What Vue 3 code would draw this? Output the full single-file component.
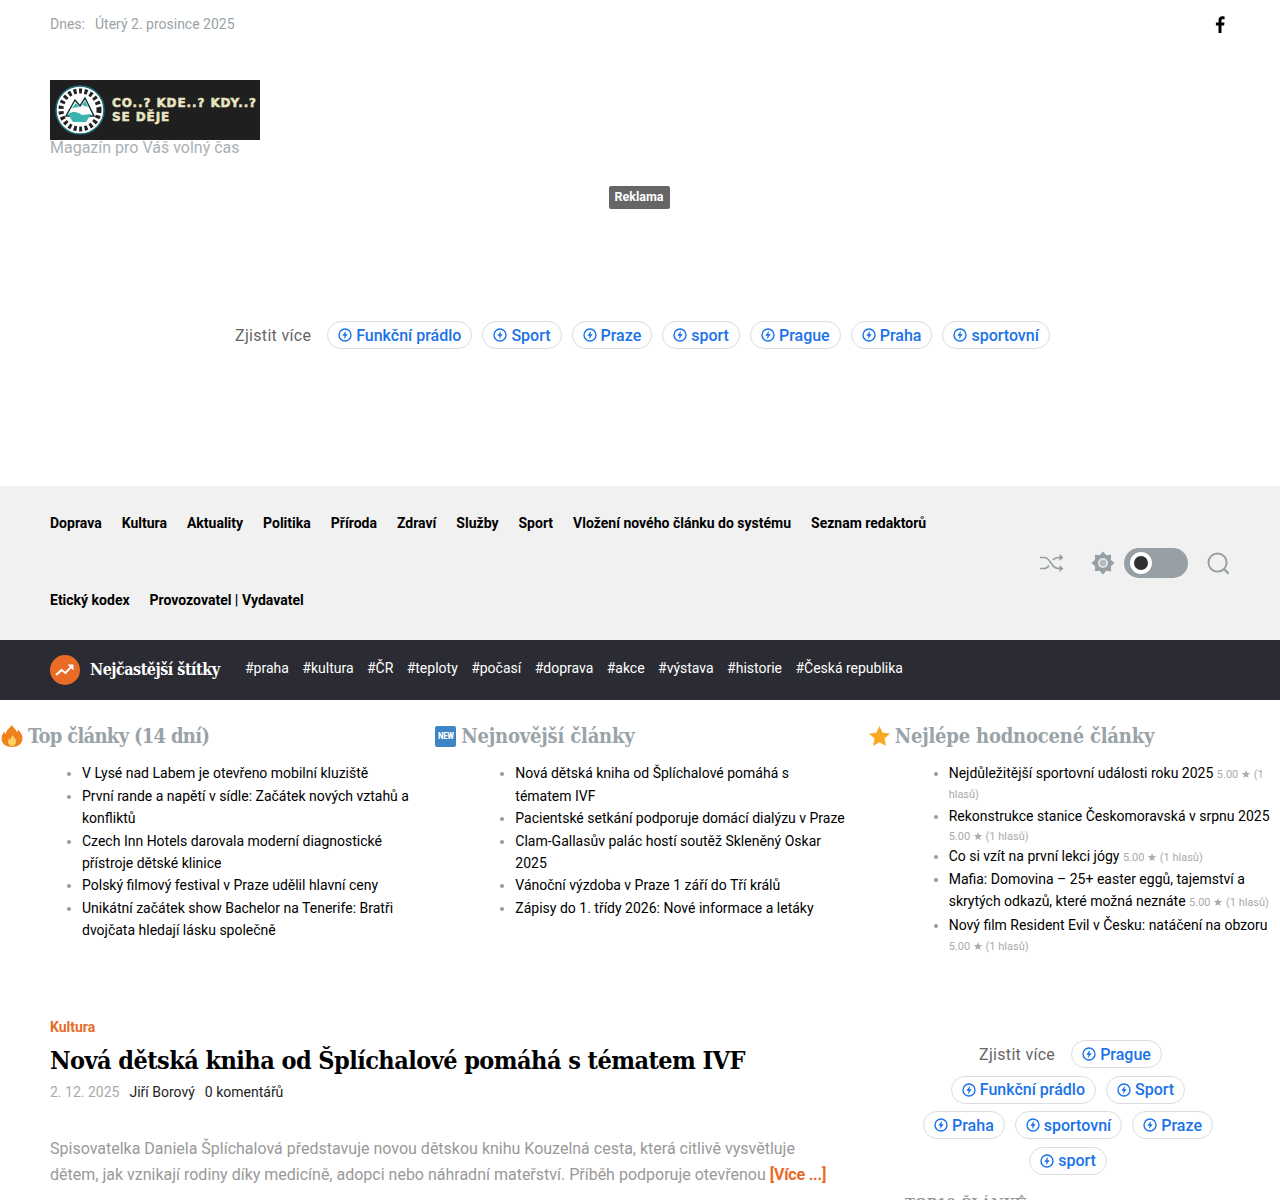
<script setup>
const chips = ['Funkční prádlo', 'Sport', 'Praze', 'sport', 'Prague', 'Praha', 'sportovní']
const sideChips = ['Prague', 'Funkční prádlo', 'Sport', 'Praha', 'sportovní', 'Praze', 'sport']
const nav = ['Doprava', 'Kultura', 'Aktuality', 'Politika', 'Příroda', 'Zdraví', 'Služby', 'Sport', 'Vložení nového článku do systému', 'Seznam redaktorů', 'Etický kodex', 'Provozovatel | Vydavatel']
const tags = ['#praha', '#kultura', '#ČR', '#teploty', '#počasí', '#doprava', '#akce', '#výstava', '#historie', '#Česká republika']
const top = [
  'V Lysé nad Labem je otevřeno mobilní kluziště',
  'První rande a napětí v sídle: Začátek nových vztahů a konfliktů',
  'Czech Inn Hotels darovala moderní diagnostické přístroje dětské klinice',
  'Polský filmový festival v Praze udělil hlavní ceny',
  'Unikátní začátek show Bachelor na Tenerife: Bratři dvojčata hledají lásku společně'
]
const newest = [
  'Nová dětská kniha od Šplíchalové pomáhá s tématem IVF',
  'Pacientské setkání podporuje domácí dialýzu v Praze',
  'Clam-Gallasův palác hostí soutěž Skleněný Oskar 2025',
  'Vánoční výzdoba v Praze 1 září do Tří králů',
  'Zápisy do 1. třídy 2026: Nové informace a letáky'
]
const rated = [
  'Nejdůležitější sportovní události roku 2025',
  'Rekonstrukce stanice Českomoravská v srpnu 2025',
  'Co si vzít na první lekci jógy',
  'Mafia: Domovina – 25+ easter eggů, tajemství a skrytých odkazů, které možná neznáte',
  'Nový film Resident Evil v Česku: natáčení na obzoru'
]
</script>

<template>
  <div class="page">
    <header class="top">
      <div class="date"><span>Dnes:</span><span>Úterý 2. prosince 2025</span></div>
      <svg class="fb" width="10" height="17" viewBox="0 0 10 17"><path d="M6.5 17V9.4h2.6l.4-3H6.5V4.6c0-.9.3-1.4 1.5-1.4h1.6V.5C9.3.4 8.400.3 7.400.3 5.100.3 3.500 1.700 3.500 4.200v2.200H.9v3h2.600V17z" fill="#000"/></svg>
    </header>

    <div class="brand">
      <div class="logo">
        <svg width="50" height="50" viewBox="0 0 50 50">
          <circle cx="25" cy="25" r="24" fill="#fff" stroke="#1d6f78" stroke-width="1.500"/>
          <circle cx="25" cy="25" r="19" fill="none" stroke="#222" stroke-width="5" stroke-dasharray="3 2.500"/>
          <path d="M11 31 20 15l5 6 5-8 9 18z" fill="#fff" stroke="#17383d" stroke-width="1.500"/>
          <path d="M13 29c6-4 11-1 14 1l9-1-5 8H18z" fill="#39b3ad"/>
          <path d="M17 23l4-5 3 4zM27 20l3-4 3 6z" fill="#39b3ad"/>
        </svg>
        <div class="logo-text"><div>CO..? KDE..? KDY..?</div><div>SE DĚJE</div></div>
      </div>
      <div class="tagline">Magazín pro Váš volný čas</div>
    </div>

    <section class="ad">
      <div class="ad-label">Reklama</div>
      <div class="chips">
        <span class="chips-label">Zjistit více</span>
        <a v-for="c in chips" :key="c" class="chip">
          <svg width="14" height="14" viewBox="0 0 14 14"><circle cx="7" cy="7" r="6" fill="none" stroke="#1a73e8" stroke-width="1.400"/><path d="M8 2.800 4.300 7.800h2.200l-.5 3.400 3.700-5H7.500z" fill="#1a73e8"/></svg>
          {{ c }}
        </a>
      </div>
    </section>

    <nav class="nav">
      <div class="nav-links"><a v-for="n in nav" :key="n">{{ n }}</a></div>
      <div class="nav-actions">
        <svg class="shuffle" width="24" height="20" viewBox="0 0 24 20" fill="none" stroke="#969fa4" stroke-width="1.700">
          <path d="M0 4.500h4c4 0 5 2.500 7 5.500s3.500 5.500 8 5.500h3M0 15.500h4c2.500 0 4-1.500 5-3M13 7c1.200-1.500 3-2.500 6-2.500h3"/>
          <path d="M19.500 1l4 3.500-4 3.500zM19.500 12l4 3.500-4 3.500z" fill="#969fa4" stroke="none"/>
        </svg>
        <svg class="gear" width="24" height="24" viewBox="0 0 24 24">
          <path d="M12 .5 15.250 4.150 20.130 3.870 19.850 8.750 23.500 12 19.850 15.250 20.130 20.130 15.250 19.850 12 23.500 8.750 19.850 3.870 20.130 4.150 15.250.5 12 4.150 8.750 3.870 3.870 8.750 4.150z" fill="#969fa4"/>
          <circle cx="12" cy="12" r="5" fill="#e4e6e7"/>
          <circle cx="12" cy="12" r="3.200" fill="#b4babd"/>
        </svg>
        <div class="toggle"><span class="knob"></span></div>
        <svg class="search" width="23" height="23" viewBox="0 0 24 24" fill="none" stroke="#969fa4" stroke-width="2"><circle cx="11" cy="11" r="9.500"/><path d="M18 18l4.500 4.500" stroke-width="2.400"/></svg>
      </div>
    </nav>

    <div class="tagbar">
      <span class="trend">
        <svg width="20" height="14" viewBox="0 0 20 14" fill="none" stroke="#fff" stroke-width="2"><path d="M1 12l5.500-5 4 3L17 3"/><path d="M12.500 1.500h6v6" fill="#fff" stroke="none"/></svg>
      </span>
      <strong class="tagbar-title">Nejčastější štítky</strong>
      <div class="tags"><a v-for="t in tags" :key="t">{{ t }}</a></div>
    </div>

    <section class="cols">
      <div class="col">
        <h2 class="tight">
          <svg class="ico-fire" width="22" height="22" viewBox="0 0 22 22">
            <path d="M11 0c1 3 4 4 5 7 .8-.6 1-1.500 1-2.500 3 3 4.500 6 4.500 9 0 5-4.500 8.500-10.500 8.500S.5 18.500.5 13.500c0-3 1.500-5 3-7 .2 1.200.6 2 1.500 2.500C5 5.500 8 3.500 11 0z" fill="#f0811f"/>
            <path d="M11.500 10c.5 2 3.500 3 3.500 6.500 0 2.500-1.800 4.500-4 4.500s-4-1.800-4-4.200c0-1.800 1-2.800 1.800-3.600.2.800.5 1.200 1 1.400.1-1.800.9-3.300 1.700-4.600z" fill="#fcd264"/>
          </svg>
          Top články (14 dní)
        </h2>
        <ul><li v-for="i in top" :key="i"><a>{{ i }}</a></li></ul>
      </div>
      <div class="col">
        <h2><span class="ico-new">NEW</span>Nejnovější články</h2>
        <ul><li v-for="i in newest" :key="i"><a>{{ i }}</a></li></ul>
      </div>
      <div class="col">
        <h2>
          <svg class="ico-star" width="21" height="20" viewBox="0 0 21 20"><path d="M10.500 0l3.100 6.700 7.400.9-5.500 5 1.500 7.300-6.500-3.700L4 19.900l1.500-7.300L0 7.600l7.400-.9z" fill="#f9a825"/></svg>
          Nejlépe hodnocené články
        </h2>
        <ul class="rated"><li v-for="i in rated" :key="i"><a>{{ i }}</a> <span>5.00 ★ (1 hlasů)</span></li></ul>
      </div>
    </section>

    <div class="content">
      <article class="article">
        <div class="cat">Kultura</div>
        <h1>Nová dětská kniha od Šplíchalové pomáhá s tématem IVF</h1>
        <div class="meta"><span class="when">2. 12. 2025</span><span>Jiří Borový</span><span>0 komentářů</span></div>
        <p>Spisovatelka Daniela Šplíchalová představuje novou dětskou knihu Kouzelná cesta, která citlivě vysvětluje dětem, jak vznikají rodiny díky medicíně, adopci nebo náhradní mateřství. Příběh podporuje otevřenou <b>[Více ...]</b></p>
      </article>
      <aside class="side">
        <div class="chips side-chips">
          <span class="chips-label">Zjistit více</span>
          <a v-for="c in sideChips" :key="c" class="chip">
            <svg width="14" height="14" viewBox="0 0 14 14"><circle cx="7" cy="7" r="6" fill="none" stroke="#1a73e8" stroke-width="1.400"/><path d="M8 2.800 4.300 7.800h2.200l-.5 3.400 3.700-5H7.500z" fill="#1a73e8"/></svg>
            {{ c }}
          </a>
        </div>
        <h3>TOP10 ČLÁNKŮ</h3>
      </aside>
    </div>
  </div>
</template>

<style>
html, body { margin: 0; background: #fff; }
</style>

<style scoped>
.page {
  height: 1200px;
  overflow: hidden;
  font-family: Roboto, "Liberation Sans", sans-serif;
  color: #000;
}
.top {
  height: 48px;
  padding: 0 55px 0 50px;
  display: flex;
  align-items: center;
  justify-content: space-between;
}
.date { display: flex; gap: 10px; font-size: 14px; color: #9aa3a8; }
.brand { padding: 32px 50px 0; height: 106px; }
.logo {
  width: 210px;
  height: 60px;
  background: #1f1f1f;
  display: flex;
  align-items: center;
  gap: 7px;
  padding-left: 5px;
  box-sizing: border-box;
  overflow: hidden;
}
.logo-text {
  font-family: "DejaVu Sans", sans-serif;
  font-weight: 700;
  font-size: 12px;
  line-height: 14px;
  letter-spacing: .9px;
  color: #e9e5c3;
  white-space: nowrap;
  -webkit-text-stroke: .5px #e9e5c3;
}
.tagline { font-size: 16px; line-height: 16px; color: #aab0b5; }
.ad {
  height: 300px;
  display: flex;
  flex-direction: column;
  align-items: center;
}
.ad-label {
  width: 61px;
  height: 23px;
  margin-right: 2px;
  background: #666;
  color: #fff;
  border-radius: 2px;
  font-size: 12.500px;
  font-weight: 700;
  line-height: 22px;
  text-align: center;
}
.chips {
  display: flex;
  flex-wrap: wrap;
  justify-content: center;
  align-items: center;
  gap: 7.600px 10px;
  margin-top: 112px;
}
.chips-label {
  margin-left: 5px;
  margin-right: 6px;
  font-size: 16px;
  color: #666;
  letter-spacing: .3px;
}
.chip {
  display: flex;
  align-items: center;
  gap: 4px;
  height: 28px;
  padding: 0 10px;
  box-sizing: border-box;
  border: 1px solid #ddd;
  border-radius: 14px;
  font-size: 16px;
  font-weight: 500;
  color: #1a73e8;
  white-space: nowrap;
}
.nav {
  background: #f1f1f1;
  height: 154px;
  padding: 0 50px;
  display: flex;
  justify-content: space-between;
  align-items: center;
}
.nav-links {
  width: 960px;
  display: flex;
  flex-wrap: wrap;
  column-gap: 20px;
  margin-top: -2px;
}
.nav-links a {
  font-size: 14px;
  font-weight: 700;
  line-height: 77px;
  color: #000;
}
.nav-actions { display: flex; align-items: center; }
.shuffle { margin-right: 27px; }
.gear { margin-right: 9px; }
.toggle {
  width: 64px;
  height: 30px;
  border-radius: 15px;
  background: #969fa4;
  position: relative;
  margin-right: 19px;
}
.knob {
  position: absolute;
  left: 6px;
  top: 4px;
  width: 22px;
  height: 22px;
  box-sizing: border-box;
  border-radius: 50%;
  background: #303030;
  border: 4px solid #fff;
}
.tagbar {
  background: #2b2c33;
  height: 60px;
  padding: 0 50px;
  display: flex;
  align-items: center;
}
.trend {
  width: 30px;
  height: 30px;
  border-radius: 50%;
  background: #e96b26;
  display: flex;
  align-items: center;
  justify-content: center;
}
.tagbar-title {
  margin: 0 0 2px 10px;
  width: 156px;
  flex: none;
  color: #fff;
  font-family: "DejaVu Serif", serif;
  font-stretch: condensed;
  font-size: 16px;
  letter-spacing: -.5px;
  white-space: nowrap;
}
.tags { display: flex; gap: 13.400px; margin: 0 0 4px -1px; }
.tags a { color: #fff; font-size: 14px; }
.cols { display: grid; grid-template-columns: repeat(3, 1fr); column-gap: 20px; height: 319px; }
.col { min-width: 0; }
.col h2 {
  margin: 23px 0 0;
  height: 26px;
  display: flex;
  align-items: center;
  font-family: "DejaVu Serif", serif;
  font-stretch: condensed;
  font-size: 20px;
  font-weight: 700;
  letter-spacing: -.2px;
  line-height: 26px;
  color: #99a3a8;
  white-space: nowrap;
}
.col h2.tight { letter-spacing: -.7px; }
.ico-fire { margin: 0 5px 0 1px; }
.ico-new {
  width: 21px;
  height: 21px;
  margin: 0 5px 0 2px;
  border-radius: 2px;
  background: #3d85c6;
  color: #fff;
  font-family: Roboto, sans-serif;
  font-size: 9px;
  font-weight: 700;
  letter-spacing: -.3px;
  line-height: 21px;
  text-align: center;
}
.ico-star { margin: 0 5px 0 2px; }
.col ul {
  margin: 13.300px 0 0;
  padding: 0 0 0 82px;
  list-style: disc;
  font-size: 14px;
  line-height: 22.400px;
}
.col li::marker { color: #999; }
.col a { color: #000; font-size: 14px; line-height: 22.400px; }
.col ul.rated { line-height: 17px; }
.rated span { color: #aaa; font-size: 11px; line-height: 17px; }
.rated li:nth-child(3n+2) span::before {
  content: "";
  display: inline-block;
  width: 0;
  height: 18px;
}
.content { display: grid; grid-template-columns: 855px 326px; padding-left: 50px; }
.article { padding-right: 75px; }
.cat { font-size: 14px; font-weight: 700; line-height: 16px; color: #e96b26; }
h1 {
  margin: 8px 0 0;
  font-family: "DejaVu Serif", serif;
  font-stretch: condensed;
  font-size: 25px;
  font-weight: 700;
  letter-spacing: -.55px;
  line-height: 36px;
  white-space: nowrap;
}
.meta { margin-top: 3px; display: flex; gap: 10px; font-size: 14px; line-height: 20px; color: #222; }
.when { color: #aaa; }
.article p {
  margin: 34px 0 0;
  font-size: 16px;
  line-height: 26px;
  color: #999;
}
.article p b { color: #e96b26; letter-spacing: -.2px; }
.side { margin-top: 21px; }
.side-chips { margin-top: 0; padding: 0 4px; }
.side h3 {
  margin: 20px 0 0;
  font-family: "DejaVu Serif", serif;
  font-stretch: condensed;
  font-size: 15px;
  font-weight: 700;
  color: #999;
}
</style>
